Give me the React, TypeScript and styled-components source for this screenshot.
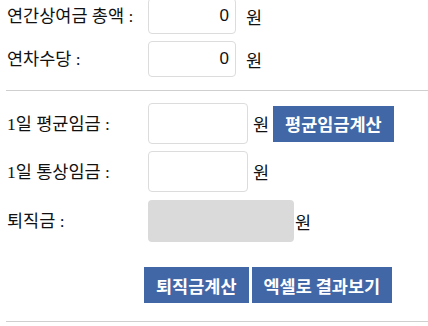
import { createGlobalStyle, styled } from "styled-components";

const GlobalStyle = createGlobalStyle`
  body {
    margin: 0;
    background: #fff;
    color: #111;
    font-family: "Liberation Serif", "Noto Sans CJK KR", serif;
  }
`;

const App = () => {
  return (
    <>
      <GlobalStyle />
      <Page>
        <Section $top={-2}>
          <Row>
            <Label>연간상여금 총액 :</Label>
            <Amount $width={88} defaultValue="0" />
            <Unit $gap={10}>원</Unit>
          </Row>
          <Row>
            <Label>연차수당 :</Label>
            <Amount $width={88} defaultValue="0" />
            <Unit $gap={10}>원</Unit>
          </Row>
        </Section>
        <Divider />
        <Section $top={12}>
          <Row>
            <Label>1일 평균임금 :</Label>
            <Amount $width={100} $height={41} />
            <Unit $gap={5}>원</Unit>
            <Button $gap={4}>평균임금계산</Button>
          </Row>
          <Row>
            <Label>1일 통상임금 :</Label>
            <Amount $width={100} $height={41} />
            <Unit $gap={5}>원</Unit>
          </Row>
          <Row $mt={1}>
            <Label>퇴직금 :</Label>
            <Result />
            <Unit $gap={1}>원</Unit>
          </Row>
        </Section>
        <Actions>
          <Button>퇴직금계산</Button>
          <Button>엑셀로 결과보기</Button>
        </Actions>
        <Divider />
      </Page>
    </>
  );
};

export default App;

const Page = styled.div`
  display: flex;
  flex-direction: column;
  padding-left: 6px;
`;

const Section = styled.div<{ $top: number }>`
  display: flex;
  flex-direction: column;
  gap: 7px;
  margin-top: ${({ $top }) => $top}px;
  margin-bottom: 13px;
`;

const Row = styled.div<{ $mt?: number }>`
  display: flex;
  align-items: center;
  margin-top: ${({ $mt }) => $mt ?? 0}px;
`;

const Label = styled.div`
  width: 141px;
  padding-left: 1px;
  font-size: 17.5px;
  line-height: 20px;
  color: #111;
  white-space: nowrap;
`;

const Amount = styled.input<{ $width: number; $height?: number }>`
  box-sizing: border-box;
  width: ${({ $width }) => $width}px;
  height: ${({ $height }) => $height ?? 36}px;
  padding: 0 6px;
  border: 1px solid #dcdcdc;
  border-radius: 4px;
  background: #fff;
  text-align: right;
  font-family: "Liberation Sans", "Noto Sans CJK KR", sans-serif;
  font-size: 17px;
  color: #111;
  outline: none;
`;

const Result = styled.div`
  width: 146px;
  height: 42px;
  border-radius: 4px;
  background: #dadada;
`;

const Unit = styled.span<{ $gap: number }>`
  margin-left: ${({ $gap }) => $gap}px;
  font-family: "Noto Sans CJK KR", sans-serif;
  font-size: 17.5px;
  color: #111;
`;

const Button = styled.button<{ $gap?: number }>`
  height: 36px;
  margin-left: ${({ $gap }) => $gap ?? 0}px;
  padding: 0 12px;
  border: none;
  border-radius: 0;
  background: #4267a6;
  color: #fff;
  font-family: "Noto Sans CJK KR", sans-serif;
  font-size: 17.5px;
  font-weight: 700;
  cursor: pointer;
`;

const Actions = styled.div`
  display: flex;
  gap: 3px;
  margin: 12px 0 18px 138px;
`;

const Divider = styled.hr`
  width: 100%;
  margin: 0;
  border: none;
  border-top: 1px solid #cfcfcf;
`;
